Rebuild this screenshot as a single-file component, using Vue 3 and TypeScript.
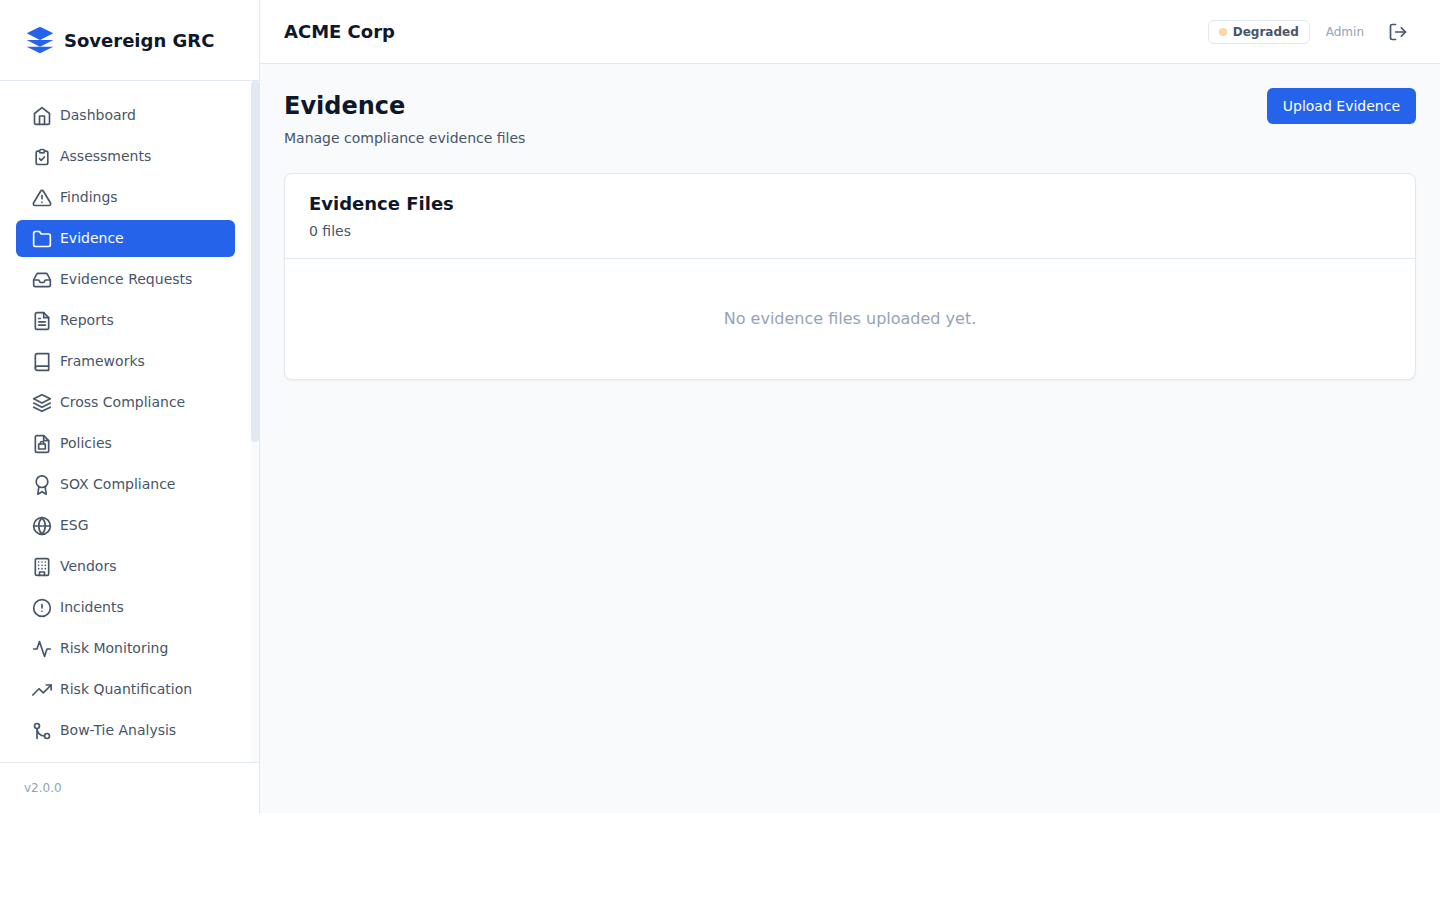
<script setup lang="ts">
interface NavItem {
  label: string
  paths: string[]
}

const active = 'Evidence'

const items: NavItem[] = [
  { label: 'Dashboard', paths: ['M3 9l9-7 9 7v11a2 2 0 0 1-2 2H5a2 2 0 0 1-2-2z', 'M9 22V12h6v10'] },
  {
    label: 'Assessments',
    paths: [
      'M9 5H7a2 2 0 0 0-2 2v12a2 2 0 0 0 2 2h10a2 2 0 0 0 2-2V7a2 2 0 0 0-2-2h-2',
      'M9 5a2 2 0 0 0 2 2h2a2 2 0 0 0 2-2M9 5a2 2 0 0 1 2-2h2a2 2 0 0 1 2 2',
      'M9 14l2 2 4-4',
    ],
  },
  {
    label: 'Findings',
    paths: ['M10.29 3.86L1.82 18a2 2 0 0 0 1.71 3h16.94a2 2 0 0 0 1.71-3L13.71 3.86a2 2 0 0 0-3.42 0z', 'M12 9v4', 'M12 17h.01'],
  },
  { label: 'Evidence', paths: ['M22 19a2 2 0 0 1-2 2H4a2 2 0 0 1-2-2V5a2 2 0 0 1 2-2h5l2 3h9a2 2 0 0 1 2 2z'] },
  {
    label: 'Evidence Requests',
    paths: [
      'M22 12h-6l-2 3h-4l-2-3H2',
      'M5.45 5.11L2 12v6a2 2 0 0 0 2 2h16a2 2 0 0 0 2-2v-6l-3.45-6.89A2 2 0 0 0 16.76 4H7.24a2 2 0 0 0-1.79 1.11z',
    ],
  },
  {
    label: 'Reports',
    paths: ['M14 2H6a2 2 0 0 0-2 2v16a2 2 0 0 0 2 2h12a2 2 0 0 0 2-2V8z', 'M14 2v6h6', 'M16 13H8', 'M16 17H8', 'M10 9H8'],
  },
  {
    label: 'Frameworks',
    paths: ['M4 19.5A2.5 2.5 0 0 1 6.5 17H20', 'M6.5 2H20v20H6.5A2.5 2.5 0 0 1 4 19.5v-15A2.5 2.5 0 0 1 6.5 2z'],
  },
  { label: 'Cross Compliance', paths: ['M12 2L2 7l10 5 10-5-10-5z', 'M2 17l10 5 10-5', 'M2 12l10 5 10-5'] },
  {
    label: 'Policies',
    paths: [
      'M14 2H6a2 2 0 0 0-2 2v16a2 2 0 0 0 2 2h12a2 2 0 0 0 2-2V8z',
      'M14 2v6h6',
      'M8 12h8v6H8z',
      'M10 12v-1a2 2 0 1 1 4 0v1',
    ],
  },
  { label: 'SOX Compliance', paths: ['M12 1a7 7 0 1 0 0 14a7 7 0 1 0 0-14z', 'M8.21 13.89L7 23l5-3 5 3-1.21-9.12'] },
  {
    label: 'ESG',
    paths: [
      'M12 2a10 10 0 1 0 0 20a10 10 0 1 0 0-20z',
      'M2 12h20',
      'M12 2a15.3 15.3 0 0 1 4 10 15.3 15.3 0 0 1-4 10 15.3 15.3 0 0 1-4-10 15.3 15.3 0 0 1 4-10z',
    ],
  },
  {
    label: 'Vendors',
    paths: [
      'M6 2h12a2 2 0 0 1 2 2v16a2 2 0 0 1-2 2H6a2 2 0 0 1-2-2V4a2 2 0 0 1 2-2z',
      'M9 22v-4h6v4',
      'M8 6h.01M12 6h.01M16 6h.01M8 10h.01M12 10h.01M16 10h.01M8 14h.01M12 14h.01M16 14h.01',
    ],
  },
  { label: 'Incidents', paths: ['M12 2a10 10 0 1 0 0 20a10 10 0 1 0 0-20z', 'M12 8v4', 'M12 16h.01'] },
  { label: 'Risk Monitoring', paths: ['M22 12h-4l-3 9L9 3l-3 9H2'] },
  { label: 'Risk Quantification', paths: ['M23 6l-9.5 9.5-5-5L1 18', 'M17 6h6v6'] },
  {
    label: 'Bow-Tie Analysis',
    paths: ['M18 15a3 3 0 1 0 0 6a3 3 0 1 0 0-6z', 'M6 3a3 3 0 1 0 0 6a3 3 0 1 0 0-6z', 'M6 21V9a9 9 0 0 0 9 9'],
  },
]
</script>

<template>
  <div class="app">
    <aside class="sidebar">
      <div class="brand">
        <svg class="logo" viewBox="0 0 24 24" aria-hidden="true">
          <path d="M12 2L2 7l10 5 10-5-10-5z" />
          <path d="M2 12l10 5 10-5" />
          <path d="M2 17l10 5 10-5" />
        </svg>
        <span class="brand-name">Sovereign GRC</span>
      </div>
      <nav class="nav" aria-label="Main">
        <ul class="nav-list">
          <li v-for="item in items" :key="item.label">
            <a
              href="#"
              class="nav-link"
              :class="{ active: item.label === active }"
              :aria-current="item.label === active ? 'page' : undefined"
            >
              <svg class="icon" viewBox="0 0 24 24" aria-hidden="true">
                <path v-for="d in item.paths" :key="d" :d="d" />
              </svg>
              <span>{{ item.label }}</span>
            </a>
          </li>
        </ul>
        <div class="scroll-track" aria-hidden="true">
          <div class="scroll-thumb"></div>
        </div>
      </nav>
      <div class="version">v2.0.0</div>
    </aside>

    <div class="content">
      <header class="topbar">
        <div class="org">ACME Corp</div>
        <div class="topbar-right">
          <div class="status"><span class="dot"></span>Degraded</div>
          <span class="role">Admin</span>
          <button type="button" class="logout" aria-label="Log out">
            <svg class="icon" viewBox="0 0 24 24" aria-hidden="true">
              <path d="M9 21H5a2 2 0 0 1-2-2V5a2 2 0 0 1 2-2h4" />
              <path d="M16 17l5-5-5-5" />
              <path d="M21 12H9" />
            </svg>
          </button>
        </div>
      </header>

      <main class="main">
        <div class="page-head">
          <div>
            <h1>Evidence</h1>
            <p class="sub">Manage compliance evidence files</p>
          </div>
          <button type="button" class="primary">Upload Evidence</button>
        </div>
        <section class="card">
          <div class="card-head">
            <h2>Evidence Files</h2>
            <p class="sub">0 files</p>
          </div>
          <p class="empty">No evidence files uploaded yet.</p>
        </section>
      </main>
    </div>
  </div>
</template>

<style>
body {
  margin: 0;
  background: #ffffff;
}
</style>

<style scoped>
* {
  box-sizing: border-box;
}

.app {
  display: flex;
  height: calc(100vh - 87px);
  font-family: 'DejaVu Sans', sans-serif;
  font-size: 16px;
  line-height: 24px;
  color: #0f172a;
  background: #f8fafc;
}

.sidebar {
  display: flex;
  flex: none;
  flex-direction: column;
  width: 260px;
  background: #ffffff;
  border-right: 1px solid #e2e8f0;
}

.brand {
  display: flex;
  align-items: center;
  gap: 8px;
  padding: 24px;
  border-bottom: 1px solid #e2e8f0;
}

.logo {
  width: 32px;
  height: 32px;
  fill: #2563eb;
}

.brand-name,
.org {
  font-size: 18px;
  font-weight: 700;
  line-height: 27px;
}

.nav {
  display: flex;
  flex: 1;
  min-height: 0;
}

.nav-list {
  display: flex;
  flex: 1;
  flex-direction: column;
  gap: 4px;
  margin: 0;
  padding: 16px;
  overflow-y: auto;
  scrollbar-width: none;
  list-style: none;
}

.scroll-track {
  flex: none;
  width: 8px;
  background: #f8fafc;
}

.scroll-thumb {
  height: 53%;
  border-radius: 4px;
  background: #e2e8f0;
}

.nav-link {
  display: flex;
  align-items: center;
  gap: 8px;
  padding: 8px 16px;
  border-radius: 6px;
  font-size: 14px;
  line-height: 21px;
  color: #475569;
  text-decoration: none;
}

.nav-link.active {
  color: #ffffff;
  background: #2563eb;
}

.icon {
  display: block;
  flex: none;
  width: 20px;
  height: 20px;
  fill: none;
  stroke: currentColor;
  stroke-width: 2;
  stroke-linecap: round;
  stroke-linejoin: round;
}

.version {
  padding: 16px 24px;
  border-top: 1px solid #e2e8f0;
  font-size: 12px;
  line-height: 18px;
  color: #94a3b8;
}

.content {
  flex: 1;
  min-width: 0;
}

.topbar {
  display: flex;
  align-items: center;
  justify-content: space-between;
  height: 64px;
  padding: 0 24px;
  background: #ffffff;
  border-bottom: 1px solid #e2e8f0;
}

.topbar-right {
  display: flex;
  align-items: center;
  gap: 16px;
}

.status {
  display: flex;
  align-items: center;
  gap: 6px;
  padding: 2px 10px;
  border: 1px solid #e2e8f0;
  border-radius: 6px;
  font-size: 12px;
  font-weight: 700;
  line-height: 18px;
  color: #475569;
}

.dot {
  width: 8px;
  height: 8px;
  border-radius: 50%;
  background: #fbd8a0;
}

.role {
  font-size: 12px;
  line-height: 18px;
  color: #94a3b8;
}

.logout {
  padding: 8px;
  border: 0;
  color: #475569;
  background: none;
  cursor: pointer;
}

.main {
  padding: 24px;
}

.page-head {
  display: flex;
  align-items: flex-start;
  justify-content: space-between;
  margin-bottom: 24px;
}

h1,
h2,
p {
  margin: 0;
}

h1 {
  font-size: 24px;
  line-height: 36px;
}

h2 {
  font-size: 18px;
  line-height: 27px;
}

.sub {
  margin-top: 4px;
  font-size: 14px;
  line-height: 21px;
  color: #475569;
}

.primary {
  padding: 8px 16px;
  border: 0;
  border-radius: 6px;
  font-family: inherit;
  font-size: 14px;
  line-height: 20px;
  color: #ffffff;
  background: #2563eb;
  cursor: pointer;
}

.card {
  background: #ffffff;
  border: 1px solid #e2e8f0;
  border-radius: 8px;
  box-shadow: 0 1px 2px rgba(0, 0, 0, 0.05);
}

.card-head {
  padding: 16px 24px;
  border-bottom: 1px solid #e2e8f0;
}

.empty {
  padding: 48px 24px;
  text-align: center;
  color: #94a3b8;
}
</style>
